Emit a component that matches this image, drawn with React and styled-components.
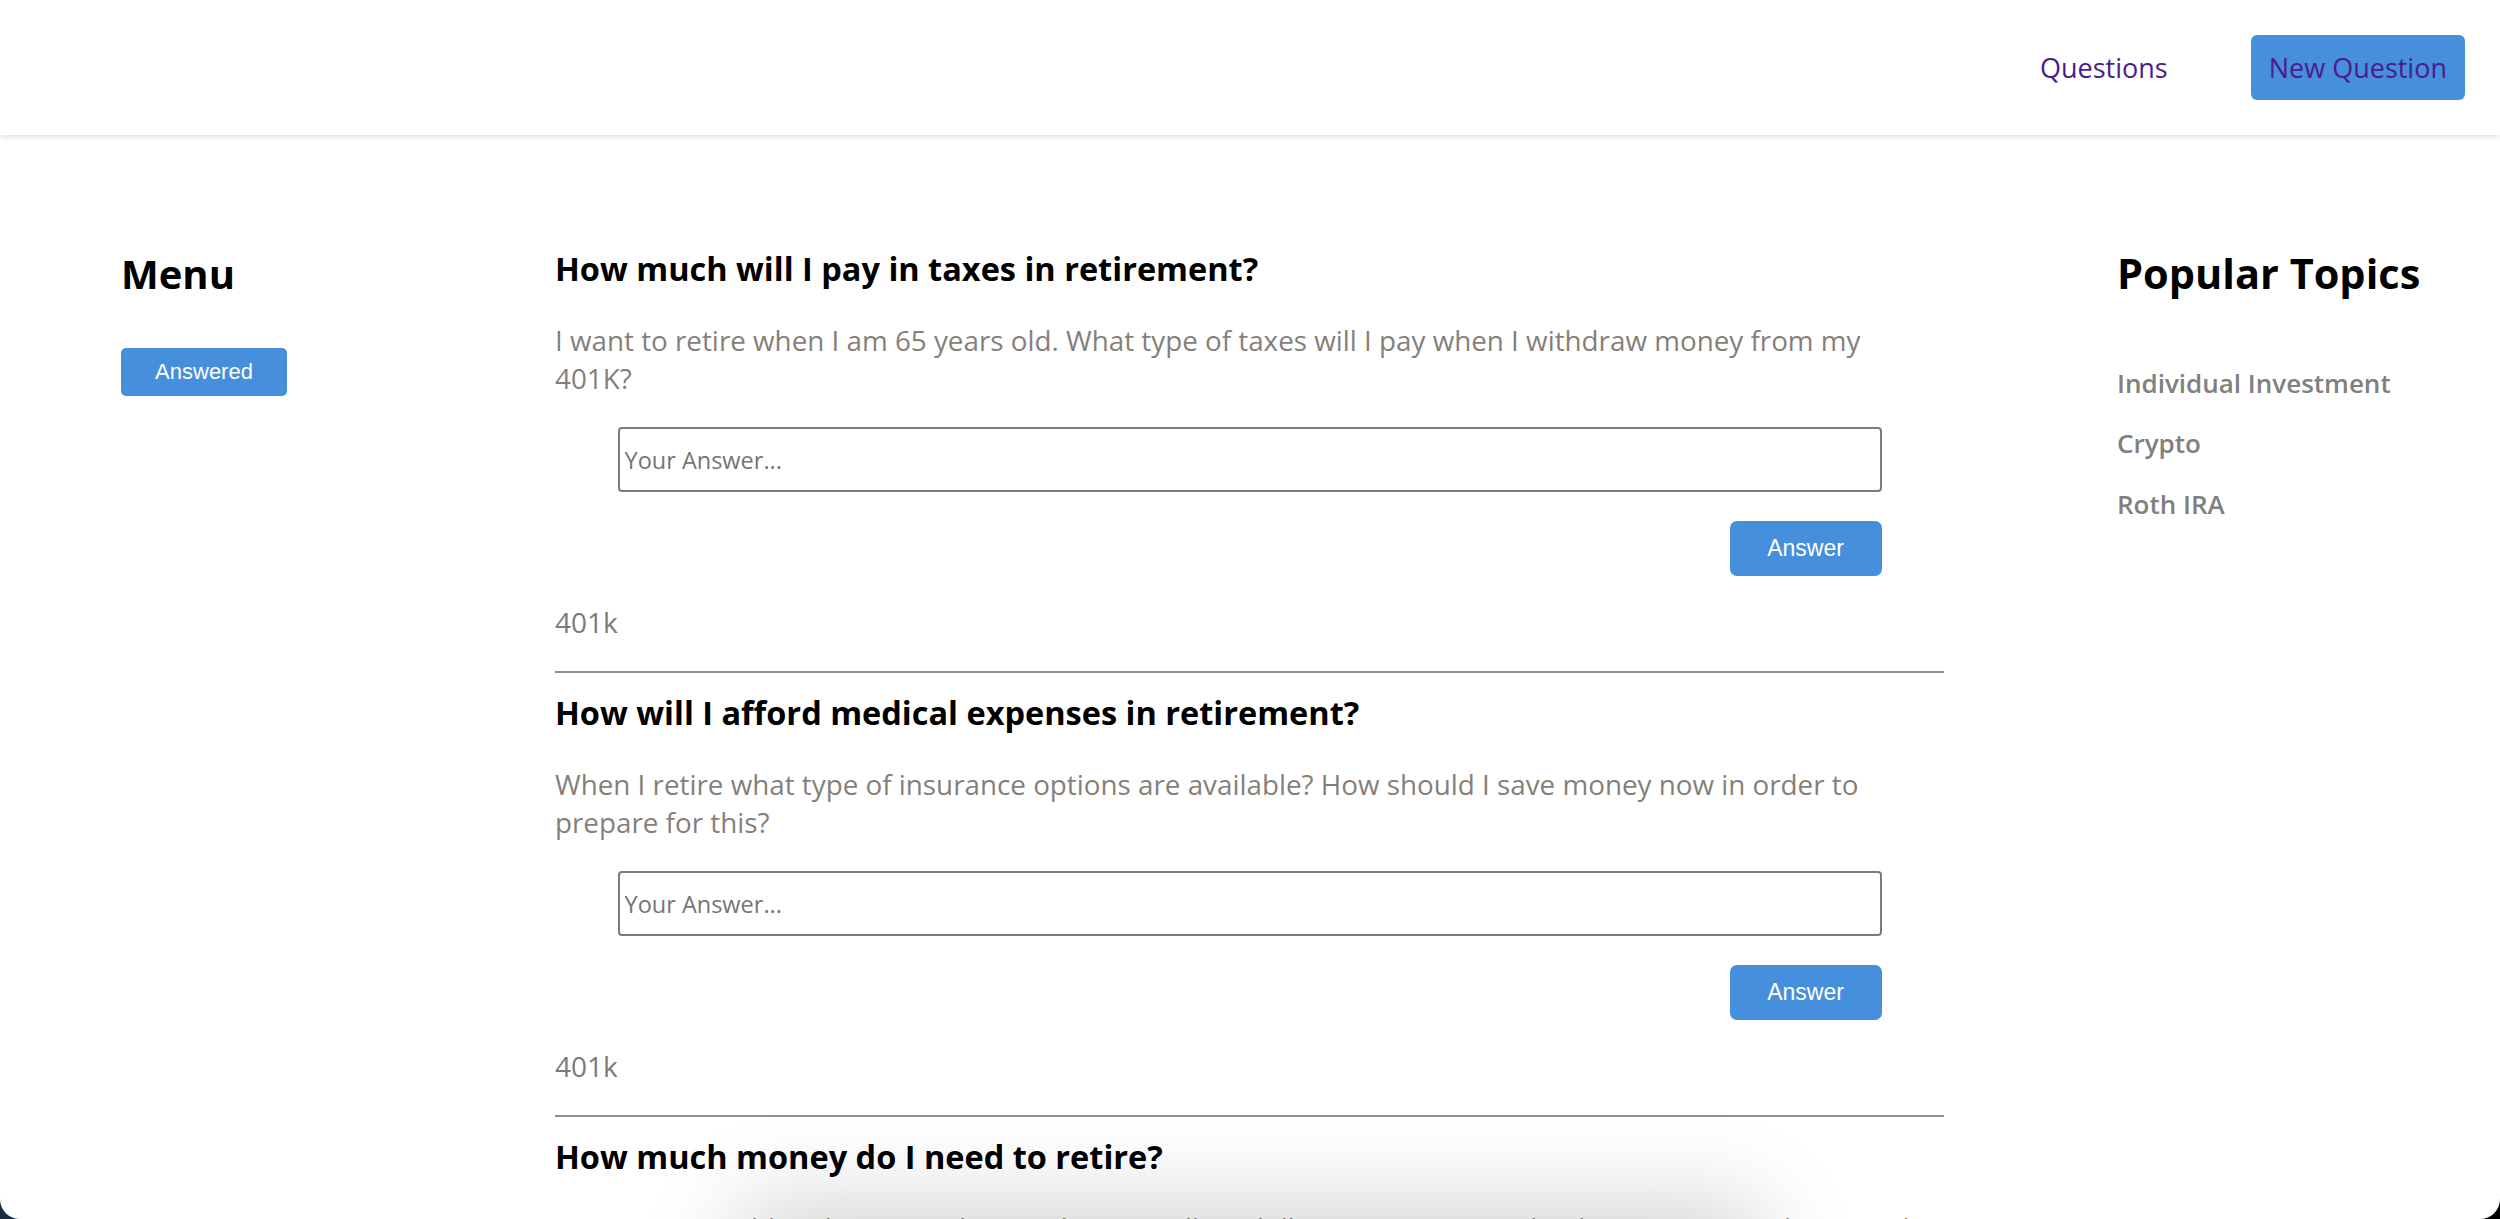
import React from "react";
import styled, { createGlobalStyle } from "styled-components";

const GlobalStyle = createGlobalStyle`
  *, *::before, *::after { box-sizing: border-box; }
  html, body {
    margin: 0;
    padding: 0;
    background: linear-gradient(90deg, #1a2b40 0%, #0c0f14 50%, #000 100%);
  }
  body {
    font-family: "Open Sans", "Liberation Sans", sans-serif;
  }
`;

const Window = styled.div`
  position: relative;
  height: 100vh;
  overflow: hidden;
  background: #fff;
  border-radius: 0 0 20px 20px;
`;

const Header = styled.header`
  position: relative;
  z-index: 1;
  height: 135px;
  display: flex;
  align-items: center;
  justify-content: flex-end;
  gap: 83px;
  padding-right: 35px;
  background: #fff;
  box-shadow: 0 2px 6px rgba(0, 0, 0, 0.13);
`;

const NavLink = styled.a`
  font-family: "Open Sans", sans-serif;
  font-size: 27px;
  color: #4b1c8c;
  text-decoration: none;
  cursor: pointer;
`;

const NavButton = styled.button`
  height: 65px;
  padding: 0 18px;
  background: #458fdd;
  color: #4b1c8c;
  font-family: "Open Sans", sans-serif;
  font-size: 27px;
  border: none;
  border-radius: 6px;
  cursor: pointer;
`;

const Layout = styled.div`
  display: grid;
  grid-template-columns: 261px 1389px 1fr;
  column-gap: 173px;
  align-items: start;
  padding: 111px 0 0 121px;
`;

const Sidebar = styled.aside`
  display: flex;
  flex-direction: column;
  align-items: flex-start;
`;

const SectionTitle = styled.h2`
  margin: 0;
  font-size: ${(p) => p.$size || 41}px;
  font-weight: 700;
  line-height: 55px;
  color: #000;
  white-space: nowrap;
`;

const FilterButton = styled.button`
  margin-top: 47px;
  width: 166px;
  height: 48px;
  background: #458fdd;
  color: #fff;
  font-family: "Liberation Sans", Arial, sans-serif;
  font-size: 22px;
  border: none;
  border-radius: 5px;
  cursor: pointer;
`;

const Feed = styled.main`
  display: flex;
  flex-direction: column;
`;

const Question = styled.article`
  padding-top: ${(p) => (p.$first ? 0 : 17)}px;
  padding-bottom: 30px;
  border-bottom: 2px solid #8e8e8e;
`;

const QTitle = styled.h3`
  margin: 0;
  font-size: 32.5px;
  font-weight: 700;
  line-height: 45px;
  color: #000;
`;

const QBody = styled.p`
  margin: 31px 0 0;
  font-size: 27.8px;
  line-height: 37.5px;
  color: #857f7a;
`;

const AnswerForm = styled.form`
  width: 1264px;
  margin: 30px auto 0;
  display: flex;
  flex-direction: column;
  align-items: flex-end;
  gap: 29px;
`;

const AnswerInput = styled.input`
  width: 100%;
  height: 65px;
  padding: 0 5px;
  border: 2px solid #7b7b7b;
  border-radius: 4px;
  font-family: "Open Sans", sans-serif;
  font-size: 23.5px;
  color: #333;
  outline: none;
  &::placeholder {
    color: #757575;
  }
`;

const SubmitButton = styled.button`
  width: 152px;
  height: 55px;
  background: #458fdd;
  color: #fff;
  font-family: "Liberation Sans", Arial, sans-serif;
  font-size: 23px;
  border: none;
  border-radius: 7px;
  cursor: pointer;
`;

const Tag = styled.div`
  margin-top: 27px;
  font-size: 28px;
  line-height: 1.362;
  color: #7b7b7b;
`;

const TopicList = styled.ul`
  list-style: none;
  margin: 65px 0 0;
  padding: 0;
  display: flex;
  flex-direction: column;
  gap: 25px;
`;

const Topic = styled.li`
  font-size: 26px;
  font-weight: 600;
  line-height: 1.362;
  color: #808080;
  white-space: nowrap;
`;

const BottomGlow = styled.div`
  position: fixed;
  left: 50%;
  bottom: -100px;
  width: 1000px;
  height: 100px;
  margin-left: -500px;
  box-shadow: 0 0 100px 10px rgba(0, 0, 0, 0.2);
  pointer-events: none;
  z-index: 2;
`;

const questions = [
  {
    title: "How much will I pay in taxes in retirement?",
    body: "I want to retire when I am 65 years old. What type of taxes will I pay when I withdraw money from my 401K?",
    tag: "401k",
  },
  {
    title: "How will I afford medical expenses in retirement?",
    body: "When I retire what type of insurance options are available? How should I save money now in order to prepare for this?",
    tag: "401k",
  },
  {
    title: "How much money do I need to retire?",
    body: "I am 30 years old and I want to have at least 1 million dollars in my account by the time I retire, how much should I save each month?",
    tag: "401k",
  },
];

const topics = ["Individual Investment", "Crypto", "Roth IRA"];

export default function App() {
  return (
    <>
      <GlobalStyle />
      <Window>
        <Header>
          <NavLink>Questions</NavLink>
          <NavButton>New Question</NavButton>
        </Header>
        <Layout>
          <Sidebar>
            <SectionTitle $size={40}>Menu</SectionTitle>
            <FilterButton>Answered</FilterButton>
          </Sidebar>
          <Feed>
            {questions.map((q, i) => (
              <Question key={i} $first={i === 0}>
                <QTitle>{q.title}</QTitle>
                <QBody>{q.body}</QBody>
                <AnswerForm onSubmit={(e) => e.preventDefault()}>
                  <AnswerInput placeholder="Your Answer..." />
                  <SubmitButton type="submit">Answer</SubmitButton>
                </AnswerForm>
                <Tag>{q.tag}</Tag>
              </Question>
            ))}
          </Feed>
          <Sidebar>
            <SectionTitle $size={41.5}>Popular Topics</SectionTitle>
            <TopicList>
              {topics.map((t) => (
                <Topic key={t}>{t}</Topic>
              ))}
            </TopicList>
          </Sidebar>
        </Layout>
        <BottomGlow />
      </Window>
    </>
  );
}
